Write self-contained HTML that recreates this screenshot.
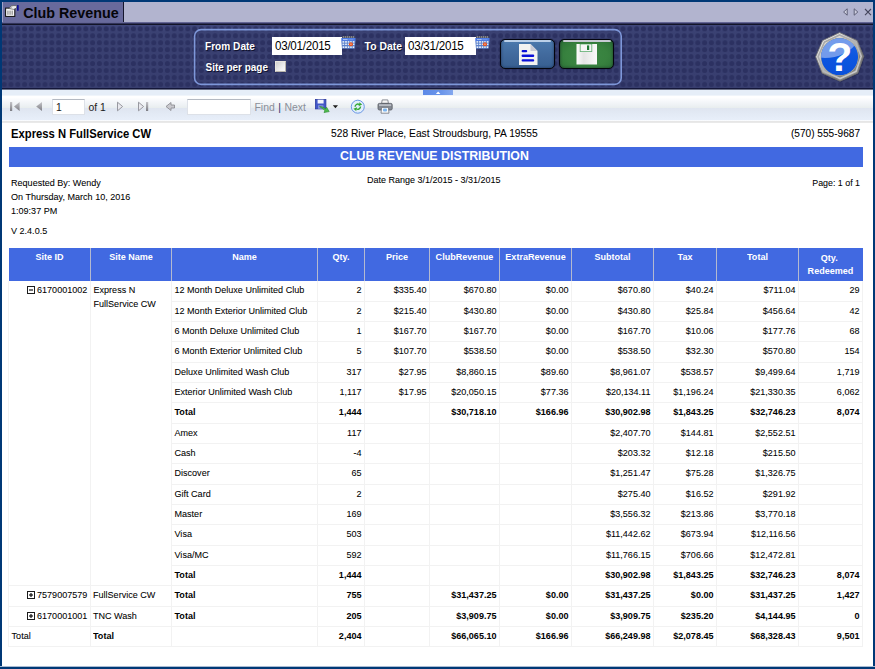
<!DOCTYPE html>
<html>
<head>
<meta charset="utf-8">
<title>Club Revenue</title>
<style>
*{box-sizing:border-box;margin:0;padding:0}
html,body{width:875px;height:669px;overflow:hidden;background:#003876;font-family:"Liberation Sans",sans-serif}
#app{position:absolute;left:0;top:0;width:875px;height:669px;background:#003876;overflow:hidden}
#win{position:absolute;left:2px;top:2px;width:871px;height:664px;background:#fff;overflow:hidden}
.abs{position:absolute}
/* tab strip */
#tabs{position:absolute;left:0;top:0;width:875px;height:24px;background:#b2b4cf}
#tab{position:absolute;left:2px;top:2px;width:122px;height:21px;background:#686a9c;border-right:1px solid #15162c}
#tabtxt{position:absolute;left:23.3px;top:4px;font-size:14.3px;font-weight:bold;color:#050509;line-height:18px;height:18px;white-space:nowrap;transform:scaleY(1.08);transform-origin:0 78%}
#tabline{position:absolute;left:2px;top:22px;width:871px;height:3px;background:linear-gradient(#7d7fb2,#2a2c52 55%,#05060f)}
/* dark panel */
#panel{position:absolute;left:2px;top:25px;width:871px;height:65px;background:#353b6e;overflow:hidden}
#panel svg.dots{position:absolute;left:0;top:0}
#panelbot{position:absolute;left:2px;top:88px;width:871px;height:2px;background:linear-gradient(#14173a 0,#14173a 1px,#6a6f86 1px)}

.lbl{position:absolute;color:#fff;font-weight:bold;font-size:10.05px;line-height:12px;height:12px;white-space:nowrap;text-shadow:1px 1px 0 #10122e;transform:scaleY(1.08);transform-origin:0 50%}
.inp{position:absolute;background:#fff;height:18px;top:37px}
.inp span{position:absolute;left:3px;top:0.1px;height:18px;font-size:11.6px;line-height:18px;color:#000;white-space:nowrap;letter-spacing:-.25px;transform:scaleY(1.1);transform-origin:0 50%}
.btn{position:absolute;top:39px;height:30px;border-radius:5px;border:1px solid #04050e;overflow:hidden;box-shadow:0 0 1px 0 #04050e,inset 0 0 3px rgba(5,10,30,.55)}
/* toolbar */
#tbtop{position:absolute;left:2px;top:90px;width:871px;height:5px;background:#e6eef8}
#toolbar{position:absolute;left:2px;top:95px;width:871px;height:28px;background:linear-gradient(#f0f5fb 0,#f0f5fb 1px,#ffffff 1px,#ffffff 2.5px,#f6f8fb 6px,#eef2f5 10px,#e9eeef 12.6px,#dfe5f0 13.4px,#e3eaf5 19px,#e7eef9 24.5px,#f6f9fd 25.2px,#fdfdfe 26px,#e6e6e6 26px,#e6e6e6 27px,#e9e9e9 27px,#e9e9e9 28px)}
.tin{position:absolute;background:#fff;border:1px solid #dde1e8;border-top-color:#b4b9c2;top:99px;height:16px}
.tt{position:absolute;font-size:10.4px;line-height:14px;top:101px;white-space:nowrap;color:#1a1a1a}
/* report */
.rt{position:absolute;white-space:nowrap;color:#000;transform:scaleY(1.07);transform-origin:0 50%;-webkit-text-stroke:.06px #000}
#bar{position:absolute;left:9px;top:147px;width:854px;height:20px;background:#4169e1}
#bartxt{position:absolute;left:7.5px;top:147px;width:854px;height:20px;color:#fff;font-weight:bold;font-size:12.37px;line-height:19px;text-align:center;transform:scaleY(1.06);transform-origin:0 50%}
.h{position:absolute;top:251.1px;height:13px;color:#fff;font-weight:bold;font-size:9.05px;line-height:13px;text-align:center;white-space:nowrap;transform:scaleY(1.08);transform-origin:0 50%}
.hs{position:absolute;top:248px;width:1px;height:33px;background:#b4bad0}
#hbg{position:absolute;left:9px;top:248px;width:854px;height:33px;background:#4169e1}
.c{position:absolute;font-size:9.05px;color:#000;white-space:nowrap;overflow:visible;transform:scaleY(1.08);transform-origin:0 50%;-webkit-text-stroke:.06px #000}
.c.l{padding-left:2.5px;text-align:left}
.c.r{padding-right:2.5px;text-align:right}
.c.b{font-weight:bold;font-size:9.05px;-webkit-text-stroke:0}
.vl{position:absolute;width:1px;background:#f2f2f2}
.hl{position:absolute;height:1px;background:#f2f2f2}
.tg{position:absolute;width:8px;height:8px}
</style>
</head>
<body>
<div id="app">
<div id="win"></div>

<!-- tab strip -->
<div id="tabs"></div>
<div class="abs" style="left:0;top:0;width:875px;height:2px;background:#003876"></div>
<div id="tab"></div>
<div class="abs" style="left:2px;top:2px;width:1px;height:21px;background:#a0a2c8"></div>
<svg class="abs" style="left:4px;top:4px" width="16" height="14" viewBox="0 0 16 14">
  <rect x="1.6" y="4.1" width="9.2" height="8.3" fill="#f7f7f7" stroke="#0e0e0e" stroke-width="1"/>
  <rect x="3.5" y="6.6" width=".9" height="4.2" fill="#6a6a6a"/><rect x="5.6" y="6.6" width=".9" height="4.2" fill="#6a6a6a"/><rect x="7.7" y="6.6" width=".9" height="4.2" fill="#6a6a6a"/>
  <path d="M4.6 4.4 L7.8 1.6 L12.8 1.6 L12.6 4 L9.6 5.4 Z" fill="#ececec" stroke="#3c3c3c" stroke-width=".6"/>
  <path d="M6 4.4 L8.4 2.4" stroke="#777" stroke-width=".7"/>
  <rect x="13" y="1.1" width="1.7" height="5.6" fill="#0a0a96"/>
</svg>
<div id="tabtxt">Club Revenue</div>
<div id="tabline"></div>
<!-- tab nav icons -->
<svg class="abs" style="left:840px;top:6.4px" width="34" height="12" viewBox="0 0 34 12">
  <path d="M7.2 2.8 L3.6 6 L7.2 9.2 Z" fill="#cfd0e0" stroke="#55566e" stroke-width=".9"/>
  <path d="M14.2 2.8 L17.8 6 L14.2 9.2 Z" fill="#cfd0e0" stroke="#55566e" stroke-width=".9"/>
  <path d="M25 3 L31 9.2 M31 3 L25 9.2" stroke="#45465c" stroke-width="1.1" fill="none"/>
</svg>

<!-- dark panel -->
<div id="panel">
<svg class="dots" width="871" height="65">
  <defs>
    <pattern id="dp" x="-1.2" y="0.33" width="6.8" height="6.94" patternUnits="userSpaceOnUse">
      <ellipse cx="3.4" cy="3.47" rx="2.55" ry="2.6" fill="#2c3161"/>
    </pattern>
    <linearGradient id="pg" x1="0" y1="0" x2="0" y2="1"><stop offset="0" stop-color="#40477b"/><stop offset=".12" stop-color="#3a4172"/><stop offset="1" stop-color="#383e6f"/></linearGradient>
  </defs>
  <rect width="871" height="65" fill="url(#pg)"/>
  <rect width="871" height="65" fill="url(#dp)"/>
</svg>
</div>
<div id="panelbot"></div>
<svg class="abs" style="left:192px;top:27px" width="432" height="60" viewBox="0 0 432 60"><rect x="2.6" y="2.6" width="426.6" height="54.8" rx="6.5" ry="6.5" fill="none" stroke="#7e97d9" stroke-width="1.6"/></svg>
<div class="lbl" style="left:205px;top:41.3px;font-size:10.12px">From Date</div>
<div class="lbl" style="left:205.5px;top:62px;font-size:9.95px">Site per page</div>
<div class="lbl" style="left:364.6px;top:41.3px;font-size:10.4px">To Date</div>
<div class="inp" style="left:272px;width:70px"><span>03/01/2015</span></div>
<div class="inp" style="left:405px;width:71px"><span>03/31/2015</span></div>
<!-- calendar icons -->
<svg class="abs cal" style="left:341px;top:36.1px" width="15" height="13" viewBox="0 0 15 13">
  <rect x="1.2" y="0.3" width="12.4" height="1.8" fill="#55565e"/>
  <path d="M2.4 0.3V1.6M4.4 0.3V1.6M6.4 0.3V1.6M8.4 0.3V1.6M10.4 0.3V1.6M12.4 0.3V1.6" stroke="#c9c9c9" stroke-width=".7"/>
  <rect x="0.3" y="2" width="14.2" height="3" fill="#4d7ae2"/>
  <rect x="2" y="3" width="4.6" height="1" fill="#a9c0f4"/><rect x="7.4" y="3.2" width="5" height=".6" fill="#7fa0ee"/>
  <path d="M0.3 5 H14.5 L13.6 12.7 H1 Z" fill="#5b80ca"/>
  <g fill="#fbfdff">
   <rect x="1.5" y="5.2" width="1.7" height="1.4"/><rect x="4.1" y="5.2" width="1.8" height="1.4"/><rect x="6.8" y="5.2" width="1.5" height="1.4"/><rect x="9.1" y="5.2" width="1.7" height="1.4" fill="#d9f0ff"/><rect x="11.8" y="5.2" width="1.6" height="1.4"/>
   <rect x="1.5" y="7.6" width="1.7" height="1.4" fill="#dfe8f8"/><rect x="4.1" y="7.6" width="1.8" height="1.4" fill="#dfe8f8"/><rect x="6.8" y="7.6" width="1.5" height="1.4"/><rect x="11.8" y="7.6" width="1.6" height="1.4" fill="#d9f0ff"/>
   <rect x="1.6" y="10.4" width="1.7" height="1.5"/><rect x="4.1" y="10.4" width="1.8" height="1.5"/><rect x="6.8" y="10.4" width="1.5" height="1.5"/><rect x="9.1" y="10.4" width="1.7" height="1.5" fill="#d9f0ff"/><rect x="11.7" y="10.4" width="1.5" height="1.5"/>
  </g>
  <circle cx="9.95" cy="8.3" r="2.05" fill="#e8521f"/><rect x="9.3" y="7.6" width="1.3" height="1.2" fill="#f7b9a0"/>
</svg>
<svg class="abs cal" style="left:475px;top:36.1px" width="15" height="13" viewBox="0 0 15 13">
  <rect x="1.2" y="0.3" width="12.4" height="1.8" fill="#55565e"/>
  <path d="M2.4 0.3V1.6M4.4 0.3V1.6M6.4 0.3V1.6M8.4 0.3V1.6M10.4 0.3V1.6M12.4 0.3V1.6" stroke="#c9c9c9" stroke-width=".7"/>
  <rect x="0.3" y="2" width="14.2" height="3" fill="#4d7ae2"/>
  <rect x="2" y="3" width="4.6" height="1" fill="#a9c0f4"/><rect x="7.4" y="3.2" width="5" height=".6" fill="#7fa0ee"/>
  <path d="M0.3 5 H14.5 L13.6 12.7 H1 Z" fill="#5b80ca"/>
  <g fill="#fbfdff">
   <rect x="1.5" y="5.2" width="1.7" height="1.4"/><rect x="4.1" y="5.2" width="1.8" height="1.4"/><rect x="6.8" y="5.2" width="1.5" height="1.4"/><rect x="9.1" y="5.2" width="1.7" height="1.4" fill="#d9f0ff"/><rect x="11.8" y="5.2" width="1.6" height="1.4"/>
   <rect x="1.5" y="7.6" width="1.7" height="1.4" fill="#dfe8f8"/><rect x="4.1" y="7.6" width="1.8" height="1.4" fill="#dfe8f8"/><rect x="6.8" y="7.6" width="1.5" height="1.4"/><rect x="11.8" y="7.6" width="1.6" height="1.4" fill="#d9f0ff"/>
   <rect x="1.6" y="10.4" width="1.7" height="1.5"/><rect x="4.1" y="10.4" width="1.8" height="1.5"/><rect x="6.8" y="10.4" width="1.5" height="1.5"/><rect x="9.1" y="10.4" width="1.7" height="1.5" fill="#d9f0ff"/><rect x="11.7" y="10.4" width="1.5" height="1.5"/>
  </g>
  <circle cx="9.95" cy="8.3" r="2.05" fill="#e8521f"/><rect x="9.3" y="7.6" width="1.3" height="1.2" fill="#f7b9a0"/>
</svg>
<!-- checkbox -->
<div class="abs" style="left:275px;top:61px;width:11px;height:11px;background:linear-gradient(135deg,#cfcfcf,#f2f2f2 70%,#fafafa);border:1px solid #e9e6df;border-right-color:#b9b5ac;border-bottom-color:#b9b5ac"></div>

<!-- buttons -->
<div class="btn" style="left:500px;width:55px;background:linear-gradient(#5585b9 0,#4875a9 14%,#41699c 55%,#375f91 100%)">
  <div class="abs" style="left:3px;top:0;width:47px;height:2px;background:#cfe0f4;border-radius:2px;opacity:.85"></div>
</div>
<div class="btn" style="left:559px;width:55px;background:radial-gradient(ellipse at 50% 55%,#3c8845 0,#38823f 55%,#2b6f36 100%)">
  <div class="abs" style="left:3px;top:0;width:48px;height:2px;background:#d0d0dc;border-radius:2px;opacity:.95"></div>
</div>
<!-- doc icon -->
<svg class="abs" style="left:519px;top:44px" width="19" height="22" viewBox="0 0 19 22">
  <path d="M0 0 H11.5 L18.5 7 V21 H0 Z" fill="#f3f3f1"/>
  <path d="M11.5 0 L18.5 7 H11.5 Z" fill="#c9cbd6"/>
  <rect x="2.6" y="6" width="5.6" height="2.2" rx="1" fill="#0a10d8"/>
  <rect x="2.6" y="10.6" width="12.6" height="2.3" rx="1" fill="#0a10d8"/>
  <rect x="2.6" y="15.2" width="12.6" height="2.3" rx="1" fill="#0a10d8"/>
</svg>
<!-- floppy icon -->
<svg class="abs" style="left:576px;top:44px" width="22" height="21" viewBox="0 0 22 21">
  <defs><linearGradient id="fg" x1="0" y1="0" x2="1" y2="0"><stop offset="0" stop-color="#fdfdfd"/><stop offset=".35" stop-color="#e4e4e4"/><stop offset="1" stop-color="#fafafa"/></linearGradient></defs>
  <rect x="0.5" y="0" width="20.5" height="20.5" fill="url(#fg)"/>
  <rect x="4.2" y="0" width="11.6" height="7.6" fill="#f6f6f6" stroke="#5fae70" stroke-width=".8"/>
  <rect x="11" y="1.4" width="2.2" height="4.6" fill="#1f7a34"/>
</svg>

<!-- help icon -->
<svg class="abs" style="left:811px;top:29px" width="58" height="58" viewBox="0 0 58 58">
  <defs>
    <linearGradient id="hs" x1="0.1" y1="0" x2="0.9" y2="1"><stop offset="0" stop-color="#ffffff"/><stop offset=".38" stop-color="#c6c6c6"/><stop offset=".72" stop-color="#7c7c7c"/><stop offset="1" stop-color="#969696"/></linearGradient>
    <linearGradient id="hs2" x1="0.1" y1="0" x2="0.9" y2="1"><stop offset="0" stop-color="#a2a2a2"/><stop offset=".5" stop-color="#b5b5b5"/><stop offset="1" stop-color="#cfcfcf"/></linearGradient>
    <linearGradient id="hb" x1="0" y1="0" x2="0" y2="1"><stop offset="0" stop-color="#1f62e4"/><stop offset=".5" stop-color="#0c56e0"/><stop offset="1" stop-color="#0a50da"/></linearGradient>
  </defs>
  <polygon points="28.6,3.4 46.4,11.4 53,27.3 47,44.4 29,52.4 11,44.4 4.3,27.8 11.4,11.4" fill="#23264d" opacity=".55" transform="translate(.6 .9)"/>
  <polygon points="28.6,3.6 46.2,11.6 52.7,27.3 46.8,44.2 29,52.2 11.2,44.2 4.6,27.8 11.6,11.6" fill="url(#hs)" stroke="#6f6f6f" stroke-width=".8"/>
  <polygon points="28.6,6 44.4,13.2 50.2,27.3 45,42.4 29,49.6 13,42.4 7.1,27.8 13.4,13.2" fill="none" stroke="url(#hs2)" stroke-width="1.6"/>
  <circle cx="28.6" cy="27.8" r="19" fill="#c9b98f"/>
  <circle cx="28.6" cy="27.8" r="18.5" fill="url(#hb)"/>
  <path d="M10.13 28.77 A18.5 18.5 0 0 1 43.37 16.67 C38 23 26 30 10.13 28.77 Z" fill="#7ea3ec" opacity=".9"/>
  <text x="28.7" y="42" text-anchor="middle" font-family="Liberation Sans, sans-serif" font-weight="bold" font-size="41" fill="#fff">?</text>
</svg>

<!-- toolbar -->
<div id="tbtop"></div>
<div class="abs" style="left:423px;top:90px;width:30px;height:5px;background:linear-gradient(90deg,#5c89e8,#6a95ea 60%,#84a8ef)"></div>
<svg class="abs" style="left:435px;top:90.6px" width="7" height="4" viewBox="0 0 7 4"><path d="M0.9 3 L3.1 0.4 L5.4 3 Z" fill="#fff"/></svg>
<div id="toolbar"></div>
<!-- nav icons -->
<svg class="abs" style="left:9px;top:100px" width="170" height="14" viewBox="0 0 170 14">
  <defs><linearGradient id="ng" x1="0" y1="0" x2="0" y2="1"><stop offset="0" stop-color="#c4c4c8"/><stop offset="1" stop-color="#7d7d84"/></linearGradient></defs>
  <rect x="1" y="2" width="2.2" height="9" fill="url(#ng)"/>
  <path d="M10.6 2 V11 L5 6.5 Z" fill="url(#ng)"/>
  <path d="M33 2 V11 L27.2 6.5 Z" fill="url(#ng)"/>
  <path d="M108.5 2.2 V10.8 L113.6 6.5 Z" fill="#e9e9ee" stroke="#8e8e96" stroke-width=".9"/>
  <path d="M129.5 2.2 V10.8 L134.6 6.5 Z" fill="#e9e9ee" stroke="#8e8e96" stroke-width=".9"/>
  <rect x="137" y="2" width="2.2" height="9" fill="url(#ng)"/>
  <path d="M157 6.5 L162 2.5 V5 H165.5 V8 H162 V10.5 Z" fill="#c9c9ce" stroke="#85858c" stroke-width=".8"/>
</svg>
<div class="tin" style="left:52px;width:33px"></div>
<div class="tt" style="left:56px">1</div>
<div class="tt" style="left:88.5px">of 1</div>
<div class="tin" style="left:187px;width:64px"></div>
<div class="tt" style="left:254.5px;color:#8a8f99">Find</div>
<div class="tt" style="left:278.2px;color:#34346c">|</div>
<div class="tt" style="left:284.5px;color:#8a8f99">Next</div>
<!-- export icon -->
<svg class="abs" style="left:315px;top:98.8px" width="26" height="16" viewBox="0 0 26 16">
  <rect x="0.5" y="0.5" width="10.4" height="9.4" fill="#4257c8" stroke="#2b3aa0" stroke-width=".8"/>
  <rect x="2.6" y="0.7" width="6" height="3.8" fill="#f2f4fc"/>
  <rect x="3" y="6.2" width="5.4" height="3.6" fill="#7f8fdc"/>
  <path d="M4.6 7.6 C7 7.4 9 8.6 10.4 10 L11.6 8.2 L14.2 12.6 L9 13.6 L9.8 11.6 C8.6 10.2 6.8 9.2 4.6 7.6 Z" fill="#4cbb4c" stroke="#2a8a2e" stroke-width=".6"/>
  <path d="M17.8 6.2 H23 L20.4 9.2 Z" fill="#1e1e1e"/>
</svg>
<!-- refresh icon -->
<svg class="abs" style="left:350px;top:99.2px" width="16" height="16" viewBox="0 0 16 16">
  <circle cx="7.8" cy="7.7" r="6.5" fill="#e2eefc" stroke="#6a98e6" stroke-width="1"/>
  <path d="M4.4 7.8 A3.4 3.4 0 0 1 9.4 4.8 L9.2 3.2 L12.2 5.6 L8.6 7.2 L8.8 5.9 A2.2 2.2 0 0 0 5.8 7.8 Z" fill="#34a834"/>
  <path d="M11.2 7.6 A3.4 3.4 0 0 1 6.2 10.6 L6.4 12.2 L3.4 9.8 L7 8.2 L6.8 9.5 A2.2 2.2 0 0 0 9.8 7.6 Z" fill="#34a834"/>
</svg>
<!-- print icon -->
<svg class="abs" style="left:377px;top:99.4px" width="16" height="16" viewBox="0 0 16 16">
  <path d="M4.6 4.4 L5.2 0.9 H10.8 L11.4 4.4 Z" fill="#f6f6f6" stroke="#70747c" stroke-width=".8"/>
  <rect x="1" y="4.4" width="14.2" height="6.6" rx="1.4" fill="#858a93" stroke="#555961" stroke-width=".8"/>
  <rect x="2" y="5.3" width="12.2" height="1.6" fill="#bfc3ca"/>
  <path d="M4.6 8.4 H11.4 L12 14.2 H4 Z" fill="#fbfbfb" stroke="#70747c" stroke-width=".8"/>
  <rect x="6" y="9.6" width="4" height="3" rx="1" fill="#7db6f0"/>
</svg>

<!-- report header -->
<div class="rt" style="left:11px;top:126px;font-size:11.25px;font-weight:bold;line-height:16px;height:16px;-webkit-text-stroke:0">Express N FullService CW</div>
<div class="rt" style="left:331px;top:127px;font-size:10.25px;line-height:14px;height:14px">528 River Place, East Stroudsburg, PA 19555</div>
<div class="rt" style="right:15px;top:127px;font-size:10.1px;line-height:14px;height:14px">(570) 555-9687</div>
<div id="bar"></div><div id="bartxt">CLUB REVENUE DISTRIBUTION</div>
<div class="rt" style="left:11px;top:177px;font-size:9.05px;line-height:13.7px;height:13.7px">Requested By: Wendy</div>
<div class="rt" style="left:11px;top:190.8px;font-size:9.05px;line-height:13.7px;height:13.7px">On Thursday, March 10, 2016</div>
<div class="rt" style="left:11px;top:204.6px;font-size:9.05px;line-height:13.7px;height:13.7px">1:09:37 PM</div>
<div class="rt" style="left:11px;top:224.7px;font-size:9.05px;line-height:13.7px;height:13.7px">V 2.4.0.5</div>
<div class="rt" style="left:367px;top:173.8px;font-size:9.0px;line-height:13.7px;height:13.7px">Date Range 3/1/2015 - 3/31/2015</div>
<div class="rt" style="right:15px;top:177.3px;font-size:8.85px;line-height:13.7px;height:13.7px">Page: 1 of 1</div>

<!-- table -->
<div id="hbg"></div>
<div class="h" style="left:9px;width:81px">Site ID</div>
<div class="hs" style="left:90px"></div>
<div class="h" style="left:91px;width:80px">Site Name</div>
<div class="hs" style="left:171px"></div>
<div class="h" style="left:172px;width:145px">Name</div>
<div class="hs" style="left:317px"></div>
<div class="h" style="left:318px;width:46px">Qty.</div>
<div class="hs" style="left:364px"></div>
<div class="h" style="left:365px;width:64px">Price</div>
<div class="hs" style="left:429px"></div>
<div class="h" style="left:430px;width:69px">ClubRevenue</div>
<div class="hs" style="left:499px"></div>
<div class="h" style="left:500px;width:71px">ExtraRevenue</div>
<div class="hs" style="left:571px"></div>
<div class="h" style="left:572px;width:81px">Subtotal</div>
<div class="hs" style="left:653px"></div>
<div class="h" style="left:654px;width:62px">Tax</div>
<div class="hs" style="left:716px"></div>
<div class="h" style="left:717px;width:81px">Total</div>
<div class="hs" style="left:798px"></div>
<div class="h" style="left:797.7px;width:63px;top:251.7px">Qty.</div>
<div class="h" style="left:799px;width:63px;top:265px">Redeemed</div>
<div class="vl" style="left:8px;top:281px;height:366px"></div>
<div class="vl" style="left:90px;top:281px;height:366px"></div>
<div class="vl" style="left:171px;top:281px;height:366px"></div>
<div class="vl" style="left:317px;top:281px;height:366px"></div>
<div class="vl" style="left:364px;top:281px;height:366px"></div>
<div class="vl" style="left:429px;top:281px;height:366px"></div>
<div class="vl" style="left:499px;top:281px;height:366px"></div>
<div class="vl" style="left:571px;top:281px;height:366px"></div>
<div class="vl" style="left:653px;top:281px;height:366px"></div>
<div class="vl" style="left:716px;top:281px;height:366px"></div>
<div class="vl" style="left:798px;top:281px;height:366px"></div>
<div class="vl" style="left:862px;top:281px;height:366px"></div>
<div class="hl" style="left:171px;top:301px;width:692px"></div>
<div class="hl" style="left:171px;top:321px;width:692px"></div>
<div class="hl" style="left:171px;top:341px;width:692px"></div>
<div class="hl" style="left:171px;top:362px;width:692px"></div>
<div class="hl" style="left:171px;top:382px;width:692px"></div>
<div class="hl" style="left:171px;top:402px;width:692px"></div>
<div class="hl" style="left:171px;top:423px;width:692px"></div>
<div class="hl" style="left:171px;top:443px;width:692px"></div>
<div class="hl" style="left:171px;top:463px;width:692px"></div>
<div class="hl" style="left:171px;top:484px;width:692px"></div>
<div class="hl" style="left:171px;top:504px;width:692px"></div>
<div class="hl" style="left:171px;top:524px;width:692px"></div>
<div class="hl" style="left:171px;top:545px;width:692px"></div>
<div class="hl" style="left:171px;top:565px;width:692px"></div>
<div class="hl" style="left:8px;top:585px;width:855px"></div>
<div class="hl" style="left:8px;top:606px;width:855px"></div>
<div class="hl" style="left:8px;top:626px;width:855px"></div>
<div class="hl" style="left:8px;top:646px;width:855px"></div>
<div class="c l" style="left:172px;top:280px;width:145px;height:21px;line-height:21px">12 Month Deluxe Unlimited Club</div>
<div class="c r" style="left:318px;top:280px;width:46px;height:21px;line-height:21px">2</div>
<div class="c r" style="left:365px;top:280px;width:64px;height:21px;line-height:21px">$335.40</div>
<div class="c r" style="left:430px;top:280px;width:69px;height:21px;line-height:21px">$670.80</div>
<div class="c r" style="left:500px;top:280px;width:71px;height:21px;line-height:21px">$0.00</div>
<div class="c r" style="left:572px;top:280px;width:81px;height:21px;line-height:21px">$670.80</div>
<div class="c r" style="left:654px;top:280px;width:62px;height:21px;line-height:21px">$40.24</div>
<div class="c r" style="left:717px;top:280px;width:81px;height:21px;line-height:21px">$711.04</div>
<div class="c r" style="left:799px;top:280px;width:63px;height:21px;line-height:21px">29</div>
<div class="c l" style="left:172px;top:301px;width:145px;height:20px;line-height:20px">12 Month Exterior Unlimited Club</div>
<div class="c r" style="left:318px;top:301px;width:46px;height:20px;line-height:20px">2</div>
<div class="c r" style="left:365px;top:301px;width:64px;height:20px;line-height:20px">$215.40</div>
<div class="c r" style="left:430px;top:301px;width:69px;height:20px;line-height:20px">$430.80</div>
<div class="c r" style="left:500px;top:301px;width:71px;height:20px;line-height:20px">$0.00</div>
<div class="c r" style="left:572px;top:301px;width:81px;height:20px;line-height:20px">$430.80</div>
<div class="c r" style="left:654px;top:301px;width:62px;height:20px;line-height:20px">$25.84</div>
<div class="c r" style="left:717px;top:301px;width:81px;height:20px;line-height:20px">$456.64</div>
<div class="c r" style="left:799px;top:301px;width:63px;height:20px;line-height:20px">42</div>
<div class="c l" style="left:172px;top:321px;width:145px;height:20px;line-height:20px">6 Month Deluxe Unlimited Club</div>
<div class="c r" style="left:318px;top:321px;width:46px;height:20px;line-height:20px">1</div>
<div class="c r" style="left:365px;top:321px;width:64px;height:20px;line-height:20px">$167.70</div>
<div class="c r" style="left:430px;top:321px;width:69px;height:20px;line-height:20px">$167.70</div>
<div class="c r" style="left:500px;top:321px;width:71px;height:20px;line-height:20px">$0.00</div>
<div class="c r" style="left:572px;top:321px;width:81px;height:20px;line-height:20px">$167.70</div>
<div class="c r" style="left:654px;top:321px;width:62px;height:20px;line-height:20px">$10.06</div>
<div class="c r" style="left:717px;top:321px;width:81px;height:20px;line-height:20px">$177.76</div>
<div class="c r" style="left:799px;top:321px;width:63px;height:20px;line-height:20px">68</div>
<div class="c l" style="left:172px;top:341px;width:145px;height:21px;line-height:21px">6 Month Exterior Unlimited Club</div>
<div class="c r" style="left:318px;top:341px;width:46px;height:21px;line-height:21px">5</div>
<div class="c r" style="left:365px;top:341px;width:64px;height:21px;line-height:21px">$107.70</div>
<div class="c r" style="left:430px;top:341px;width:69px;height:21px;line-height:21px">$538.50</div>
<div class="c r" style="left:500px;top:341px;width:71px;height:21px;line-height:21px">$0.00</div>
<div class="c r" style="left:572px;top:341px;width:81px;height:21px;line-height:21px">$538.50</div>
<div class="c r" style="left:654px;top:341px;width:62px;height:21px;line-height:21px">$32.30</div>
<div class="c r" style="left:717px;top:341px;width:81px;height:21px;line-height:21px">$570.80</div>
<div class="c r" style="left:799px;top:341px;width:63px;height:21px;line-height:21px">154</div>
<div class="c l" style="left:172px;top:362px;width:145px;height:20px;line-height:20px">Deluxe Unlimited Wash Club</div>
<div class="c r" style="left:318px;top:362px;width:46px;height:20px;line-height:20px">317</div>
<div class="c r" style="left:365px;top:362px;width:64px;height:20px;line-height:20px">$27.95</div>
<div class="c r" style="left:430px;top:362px;width:69px;height:20px;line-height:20px">$8,860.15</div>
<div class="c r" style="left:500px;top:362px;width:71px;height:20px;line-height:20px">$89.60</div>
<div class="c r" style="left:572px;top:362px;width:81px;height:20px;line-height:20px">$8,961.07</div>
<div class="c r" style="left:654px;top:362px;width:62px;height:20px;line-height:20px">$538.57</div>
<div class="c r" style="left:717px;top:362px;width:81px;height:20px;line-height:20px">$9,499.64</div>
<div class="c r" style="left:799px;top:362px;width:63px;height:20px;line-height:20px">1,719</div>
<div class="c l" style="left:172px;top:382px;width:145px;height:20px;line-height:20px">Exterior Unlimited Wash Club</div>
<div class="c r" style="left:318px;top:382px;width:46px;height:20px;line-height:20px">1,117</div>
<div class="c r" style="left:365px;top:382px;width:64px;height:20px;line-height:20px">$17.95</div>
<div class="c r" style="left:430px;top:382px;width:69px;height:20px;line-height:20px">$20,050.15</div>
<div class="c r" style="left:500px;top:382px;width:71px;height:20px;line-height:20px">$77.36</div>
<div class="c r" style="left:572px;top:382px;width:81px;height:20px;line-height:20px">$20,134.11</div>
<div class="c r" style="left:654px;top:382px;width:62px;height:20px;line-height:20px">$1,196.24</div>
<div class="c r" style="left:717px;top:382px;width:81px;height:20px;line-height:20px">$21,330.35</div>
<div class="c r" style="left:799px;top:382px;width:63px;height:20px;line-height:20px">6,062</div>
<div class="c l b" style="left:172px;top:402px;width:145px;height:21px;line-height:21px">Total</div>
<div class="c r b" style="left:318px;top:402px;width:46px;height:21px;line-height:21px">1,444</div>
<div class="c r b" style="left:430px;top:402px;width:69px;height:21px;line-height:21px">$30,718.10</div>
<div class="c r b" style="left:500px;top:402px;width:71px;height:21px;line-height:21px">$166.96</div>
<div class="c r b" style="left:572px;top:402px;width:81px;height:21px;line-height:21px">$30,902.98</div>
<div class="c r b" style="left:654px;top:402px;width:62px;height:21px;line-height:21px">$1,843.25</div>
<div class="c r b" style="left:717px;top:402px;width:81px;height:21px;line-height:21px">$32,746.23</div>
<div class="c r b" style="left:799px;top:402px;width:63px;height:21px;line-height:21px">8,074</div>
<div class="c l" style="left:172px;top:423px;width:145px;height:20px;line-height:20px">Amex</div>
<div class="c r" style="left:318px;top:423px;width:46px;height:20px;line-height:20px">117</div>
<div class="c r" style="left:572px;top:423px;width:81px;height:20px;line-height:20px">$2,407.70</div>
<div class="c r" style="left:654px;top:423px;width:62px;height:20px;line-height:20px">$144.81</div>
<div class="c r" style="left:717px;top:423px;width:81px;height:20px;line-height:20px">$2,552.51</div>
<div class="c l" style="left:172px;top:443px;width:145px;height:20px;line-height:20px">Cash</div>
<div class="c r" style="left:318px;top:443px;width:46px;height:20px;line-height:20px">-4</div>
<div class="c r" style="left:572px;top:443px;width:81px;height:20px;line-height:20px">$203.32</div>
<div class="c r" style="left:654px;top:443px;width:62px;height:20px;line-height:20px">$12.18</div>
<div class="c r" style="left:717px;top:443px;width:81px;height:20px;line-height:20px">$215.50</div>
<div class="c l" style="left:172px;top:463px;width:145px;height:21px;line-height:21px">Discover</div>
<div class="c r" style="left:318px;top:463px;width:46px;height:21px;line-height:21px">65</div>
<div class="c r" style="left:572px;top:463px;width:81px;height:21px;line-height:21px">$1,251.47</div>
<div class="c r" style="left:654px;top:463px;width:62px;height:21px;line-height:21px">$75.28</div>
<div class="c r" style="left:717px;top:463px;width:81px;height:21px;line-height:21px">$1,326.75</div>
<div class="c l" style="left:172px;top:484px;width:145px;height:20px;line-height:20px">Gift Card</div>
<div class="c r" style="left:318px;top:484px;width:46px;height:20px;line-height:20px">2</div>
<div class="c r" style="left:572px;top:484px;width:81px;height:20px;line-height:20px">$275.40</div>
<div class="c r" style="left:654px;top:484px;width:62px;height:20px;line-height:20px">$16.52</div>
<div class="c r" style="left:717px;top:484px;width:81px;height:20px;line-height:20px">$291.92</div>
<div class="c l" style="left:172px;top:504px;width:145px;height:20px;line-height:20px">Master</div>
<div class="c r" style="left:318px;top:504px;width:46px;height:20px;line-height:20px">169</div>
<div class="c r" style="left:572px;top:504px;width:81px;height:20px;line-height:20px">$3,556.32</div>
<div class="c r" style="left:654px;top:504px;width:62px;height:20px;line-height:20px">$213.86</div>
<div class="c r" style="left:717px;top:504px;width:81px;height:20px;line-height:20px">$3,770.18</div>
<div class="c l" style="left:172px;top:524px;width:145px;height:21px;line-height:21px">Visa</div>
<div class="c r" style="left:318px;top:524px;width:46px;height:21px;line-height:21px">503</div>
<div class="c r" style="left:572px;top:524px;width:81px;height:21px;line-height:21px">$11,442.62</div>
<div class="c r" style="left:654px;top:524px;width:62px;height:21px;line-height:21px">$673.94</div>
<div class="c r" style="left:717px;top:524px;width:81px;height:21px;line-height:21px">$12,116.56</div>
<div class="c l" style="left:172px;top:545px;width:145px;height:20px;line-height:20px">Visa/MC</div>
<div class="c r" style="left:318px;top:545px;width:46px;height:20px;line-height:20px">592</div>
<div class="c r" style="left:572px;top:545px;width:81px;height:20px;line-height:20px">$11,766.15</div>
<div class="c r" style="left:654px;top:545px;width:62px;height:20px;line-height:20px">$706.66</div>
<div class="c r" style="left:717px;top:545px;width:81px;height:20px;line-height:20px">$12,472.81</div>
<div class="c l b" style="left:172px;top:565px;width:145px;height:20px;line-height:20px">Total</div>
<div class="c r b" style="left:318px;top:565px;width:46px;height:20px;line-height:20px">1,444</div>
<div class="c r b" style="left:572px;top:565px;width:81px;height:20px;line-height:20px">$30,902.98</div>
<div class="c r b" style="left:654px;top:565px;width:62px;height:20px;line-height:20px">$1,843.25</div>
<div class="c r b" style="left:717px;top:565px;width:81px;height:20px;line-height:20px">$32,746.23</div>
<div class="c r b" style="left:799px;top:565px;width:63px;height:20px;line-height:20px">8,074</div>
<div class="c l b" style="left:172px;top:585px;width:145px;height:21px;line-height:21px">Total</div>
<div class="c r b" style="left:318px;top:585px;width:46px;height:21px;line-height:21px">755</div>
<div class="c r b" style="left:430px;top:585px;width:69px;height:21px;line-height:21px">$31,437.25</div>
<div class="c r b" style="left:500px;top:585px;width:71px;height:21px;line-height:21px">$0.00</div>
<div class="c r b" style="left:572px;top:585px;width:81px;height:21px;line-height:21px">$31,437.25</div>
<div class="c r b" style="left:654px;top:585px;width:62px;height:21px;line-height:21px">$0.00</div>
<div class="c r b" style="left:717px;top:585px;width:81px;height:21px;line-height:21px">$31,437.25</div>
<div class="c r b" style="left:799px;top:585px;width:63px;height:21px;line-height:21px">1,427</div>
<div class="c l b" style="left:172px;top:606px;width:145px;height:20px;line-height:20px">Total</div>
<div class="c r b" style="left:318px;top:606px;width:46px;height:20px;line-height:20px">205</div>
<div class="c r b" style="left:430px;top:606px;width:69px;height:20px;line-height:20px">$3,909.75</div>
<div class="c r b" style="left:500px;top:606px;width:71px;height:20px;line-height:20px">$0.00</div>
<div class="c r b" style="left:572px;top:606px;width:81px;height:20px;line-height:20px">$3,909.75</div>
<div class="c r b" style="left:654px;top:606px;width:62px;height:20px;line-height:20px">$235.20</div>
<div class="c r b" style="left:717px;top:606px;width:81px;height:20px;line-height:20px">$4,144.95</div>
<div class="c r b" style="left:799px;top:606px;width:63px;height:20px;line-height:20px">0</div>
<div class="c r b" style="left:318px;top:626px;width:46px;height:20px;line-height:20px">2,404</div>
<div class="c r b" style="left:430px;top:626px;width:69px;height:20px;line-height:20px">$66,065.10</div>
<div class="c r b" style="left:500px;top:626px;width:71px;height:20px;line-height:20px">$166.96</div>
<div class="c r b" style="left:572px;top:626px;width:81px;height:20px;line-height:20px">$66,249.98</div>
<div class="c r b" style="left:654px;top:626px;width:62px;height:20px;line-height:20px">$2,078.45</div>
<div class="c r b" style="left:717px;top:626px;width:81px;height:20px;line-height:20px">$68,328.43</div>
<div class="c r b" style="left:799px;top:626px;width:63px;height:20px;line-height:20px">9,501</div>
<svg class="tg" style="left:27px;top:286px" viewBox="0 0 8 8"><rect x="0.5" y="0.5" width="7" height="7" fill="#fff" stroke="#1c1c1c" stroke-width="1"/><path d="M2 4H6" stroke="#111" stroke-width="1.2"/></svg>
<div class="c" style="left:37px;top:280px;height:20px;line-height:20px">6170001002</div>
<div class="c" style="left:93.5px;top:280px;height:20px;line-height:20px">Express N</div>
<div class="c" style="left:93.5px;top:293.6px;height:20px;line-height:20px">FullService CW</div>
<svg class="tg" style="left:27px;top:591px" viewBox="0 0 8 8"><rect x="0.5" y="0.5" width="7" height="7" fill="#fff" stroke="#1c1c1c" stroke-width="1"/><path d="M2 4H6" stroke="#111" stroke-width="1.2"/><path d="M4 2V6" stroke="#111" stroke-width="1.2"/></svg>
<div class="c" style="left:37px;top:585px;height:20px;line-height:20px">7579007579</div>
<div class="c" style="left:93px;top:585px;height:20px;line-height:20px">FullService CW</div>
<svg class="tg" style="left:27px;top:612px" viewBox="0 0 8 8"><rect x="0.5" y="0.5" width="7" height="7" fill="#fff" stroke="#1c1c1c" stroke-width="1"/><path d="M2 4H6" stroke="#111" stroke-width="1.2"/><path d="M4 2V6" stroke="#111" stroke-width="1.2"/></svg>
<div class="c" style="left:37px;top:606px;height:20px;line-height:20px">6170001001</div>
<div class="c" style="left:93px;top:606px;height:20px;line-height:20px">TNC Wash</div>
<div class="c" style="left:11.6px;top:626px;height:20px;line-height:20px">Total</div>
<div class="c b" style="left:93px;top:626px;height:20px;line-height:20px">Total</div>

<!-- outer borders -->
<div class="abs" style="left:0;top:0;width:2px;height:669px;background:#003876"></div>
<div class="abs" style="left:873px;top:0;width:2px;height:669px;background:#003876"></div>
<div class="abs" style="left:0;top:666px;width:875px;height:3px;background:linear-gradient(#a9bbd2 0,#a9bbd2 1px,#003876 1px)"></div>
</div>
</body>
</html>
